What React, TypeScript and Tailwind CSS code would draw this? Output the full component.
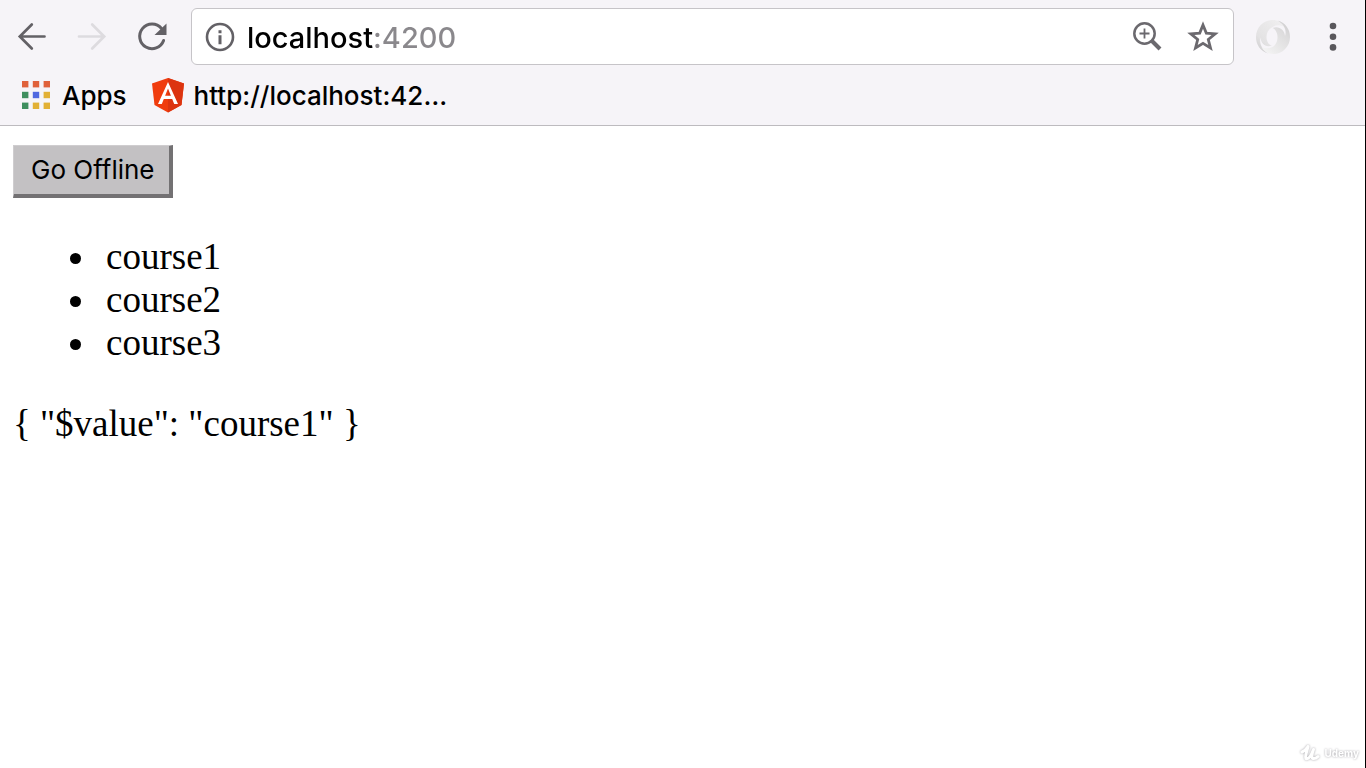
import type { ReactNode } from "react";

const courses = ["course1", "course2", "course3"];

const appColours = [
  "#e0623c", "#e0623c", "#e0623c",
  "#3f8f5f", "#5068e0", "#e2b035",
  "#3f8f5f", "#e2b035", "#e2b035",
];

function ToolButton({ label, disabled, children }: { label: string; disabled?: boolean; children: ReactNode }) {
  return (
    <button type="button" aria-label={label} disabled={disabled} className="flex h-14 w-[60px] shrink-0 items-center justify-center">
      {children}
    </button>
  );
}

function BackIcon() {
  return (
    <svg width="30" height="30" viewBox="0 0 30 30" fill="none" stroke="#636166" strokeWidth="2.700" strokeLinecap="round">
      <path d="M27.500 14.500H3M14.800 2.500L2.800 14.500l12 12" />
    </svg>
  );
}

function ForwardIcon() {
  return (
    <svg width="30" height="30" viewBox="0 0 30 30" fill="none" stroke="#dddbdf" strokeWidth="2.700" strokeLinecap="round">
      <path d="M2 14.500h25M15.200 2.500l12 12-12 12" />
    </svg>
  );
}

function ReloadIcon() {
  return (
    <svg width="32" height="32" viewBox="0 0 32 32" fill="none">
      <path d="M27.600 19.500A12.300 12.300 0 1 1 25.500 7.500" stroke="#636166" strokeWidth="3" strokeLinecap="round" />
      <path d="M30.500 2.500v11.500H18.500z" fill="#636166" />
    </svg>
  );
}

function InfoIcon() {
  return (
    <svg width="30" height="30" viewBox="0 0 30 30" fill="none" className="shrink-0">
      <circle cx="15" cy="15" r="13" stroke="#636166" strokeWidth="2.600" />
      <path d="M13.500 8.200h3v3h-3zM13.500 13.200h3v9h-3z" fill="#636166" />
    </svg>
  );
}

function ZoomIcon() {
  return (
    <svg width="32" height="32" viewBox="0 0 32 32" fill="none" stroke="#6b696e">
      <circle cx="13.500" cy="12.500" r="10.200" strokeWidth="2.500" />
      <path d="M13.500 7.500v10M8.500 12.500h10" strokeWidth="1.800" />
      <path d="M21 20l8 8" strokeWidth="4" />
    </svg>
  );
}

function StarIcon() {
  return (
    <svg width="32" height="32" viewBox="0 0 32 32" fill="none" stroke="#6b696e" strokeWidth="2.800">
      <path d="M16 4l3.300 8.100 8.900.700-6.900 5.700 2.200 8.500L16 22.400l-7.500 4.600 2.200-8.500L3.800 12.800l8.900-.700z" />
    </svg>
  );
}

function SwirlIcon() {
  return (
    <svg width="36" height="36" viewBox="0 0 36 36">
      <defs>
        <linearGradient id="swirl-left" x1="0" y1="1" x2="0.800" y2="0">
          <stop offset="0" stopColor="#c9c8ca" />
          <stop offset="0.350" stopColor="#e3e2e3" />
          <stop offset="1" stopColor="#efeeef" />
        </linearGradient>
        <linearGradient id="swirl-right" x1="1" y1="0" x2="0.200" y2="1">
          <stop offset="0" stopColor="#c9c8ca" />
          <stop offset="0.350" stopColor="#dddcdd" />
          <stop offset="1" stopColor="#f3f3f3" />
        </linearGradient>
      </defs>
      <path d="M13.500 34.500C5 32 1 25.500 1 18 1 8.500 8.500 1 17.500 1c5.500 0 9.500 2.500 12 7-4-2-8-2.300-11.500-.300C13.500 10 11.500 14 11.500 18c0 4 2 8 5.500 8.500-6 2.500-11-1.500-11.500-8C4 24 7 31 13.500 34.500z" fill="url(#swirl-left)" />
      <path d="M22.500 1.500C31 4 35 10.500 35 18c0 9.500-7.500 17-16.500 17-5.500 0-9.500-2.500-12-7 4 2 8 1.500 11 0 3.500-2 5-6 5-10 0-4-2-8-5-9 6-2.500 12 1.500 12.500 8C32 11.500 29 5 22.500 1.500z" fill="url(#swirl-right)" />
    </svg>
  );
}

function MenuIcon() {
  return (
    <svg width="10" height="30" viewBox="0 0 10 30" fill="#59575c">
      <circle cx="5" cy="4" r="3.300" />
      <circle cx="5" cy="14.700" r="3.300" />
      <circle cx="5" cy="25.400" r="3.300" />
    </svg>
  );
}

function AppsIcon() {
  return (
    <svg width="28" height="28" viewBox="0 0 28 28">
      {appColours.map((colour, i) => (
        <rect key={i} x={(i % 3) * 10.8} y={Math.floor(i / 3) * 10.8} width="6.400" height="6.400" fill={colour} />
      ))}
    </svg>
  );
}

function AngularIcon() {
  return (
    <svg width="34" height="36" viewBox="0 0 34 36">
      <path d="M17 1L33 6.500 30.500 28 17 35.500 3.500 28 1 6.500z" fill="#f03c0e" />
      <path d="M17 1L33 6.500 30.500 28 17 35.500z" fill="#dc3410" />
      <path fillRule="evenodd" d="M17 5L7 27h3.800l2-5h8.400l2 5H27zM17 11.500l2.900 7.200h-5.800z" fill="#fff" />
    </svg>
  );
}

function UdemyMark() {
  return (
    <div className="flex items-center gap-1 text-white drop-shadow-[0_0_1px_#a5a3a8]">
      <svg width="20" height="18" viewBox="0 0 20 18" fill="none" stroke="currentColor" strokeWidth="3" strokeLinecap="round" strokeLinejoin="round">
        <path d="M2 8C5 7 7 4 8 2.500 7.500 6 4.500 12 6 14.500c3 1 6-5 7.500-9-1.500 4-2.500 8.500-.500 9 2 .500 3.500-.500 5-2" />
      </svg>
      <span className="font-[Inter,sans-serif] text-[10px] leading-none font-bold">Udemy</span>
    </div>
  );
}

export default function App() {
  return (
    <div className="flex min-h-screen flex-col border-r border-black bg-white text-black">
      <header className="border-b border-[#bdbbbf] bg-[#f6f4f8] font-[Inter,sans-serif]">
        <div className="flex items-center px-0.5 pt-2">
          <ToolButton label="Back"><BackIcon /></ToolButton>
          <ToolButton label="Forward" disabled><ForwardIcon /></ToolButton>
          <ToolButton label="Reload"><ReloadIcon /></ToolButton>
          <div className="mx-[9px] flex h-[57px] min-w-0 flex-1 items-center rounded-md border border-[#c6c4c8] bg-white pr-0.5 pl-[13px]">
            <InfoIcon />
            <div className="flex min-w-0 flex-1 pl-3">
              <input
                type="text"
                aria-label="Address"
                defaultValue="localhost:4200"
                className="h-12 w-full min-w-0 bg-[linear-gradient(90deg,#000_126px,#8a888c_126px)] bg-clip-text pt-0.5 text-[29px] font-medium text-transparent caret-black outline-none"
              />
            </div>
            <button type="button" aria-label="Zoom" className="flex h-12 w-14 shrink-0 items-center justify-center"><ZoomIcon /></button>
            <button type="button" aria-label="Bookmark this page" className="flex h-12 w-14 shrink-0 items-center justify-center"><StarIcon /></button>
          </div>
          <ToolButton label="Extension"><SwirlIcon /></ToolButton>
          <ToolButton label="Menu"><MenuIcon /></ToolButton>
        </div>
        <nav aria-label="Bookmarks" className="flex h-[60px] items-center gap-6 pl-[22px] text-[26px] font-medium">
          <a href="#apps" className="flex items-center gap-3"><AppsIcon />Apps</a>
          <a href="#localhost" className="flex items-center gap-[9px]"><AngularIcon />http://localhost:42…</a>
        </nav>
      </header>
      <main className="flex-1 px-[13px] pt-[19px] font-['Liberation_Serif',serif] text-[37px] leading-[43px]">
        <button type="button" className="block h-[53px] border-t border-r-4 border-b-4 border-l border-t-[#cfcdcf] border-r-[#737173] border-b-[#737173] border-l-[#cfcdcf] bg-[#c3c1c3] pr-[14px] pl-[17px] font-[Inter,sans-serif] text-[26px] leading-8">
          Go Offline
        </button>
        <ul className="mt-[37px] pl-[57px]">
          {courses.map((course) => (
            <li key={course} className="flex items-center gap-[25px] before:mt-1 before:size-[11px] before:rounded-full before:bg-black">{course}</li>
          ))}
        </ul>
        <p className="mt-[38px]">{'{ "$value": "course1" }'}</p>
      </main>
      <footer className="flex justify-end pr-1.5 pb-1.5">
        <UdemyMark />
      </footer>
    </div>
  );
}
